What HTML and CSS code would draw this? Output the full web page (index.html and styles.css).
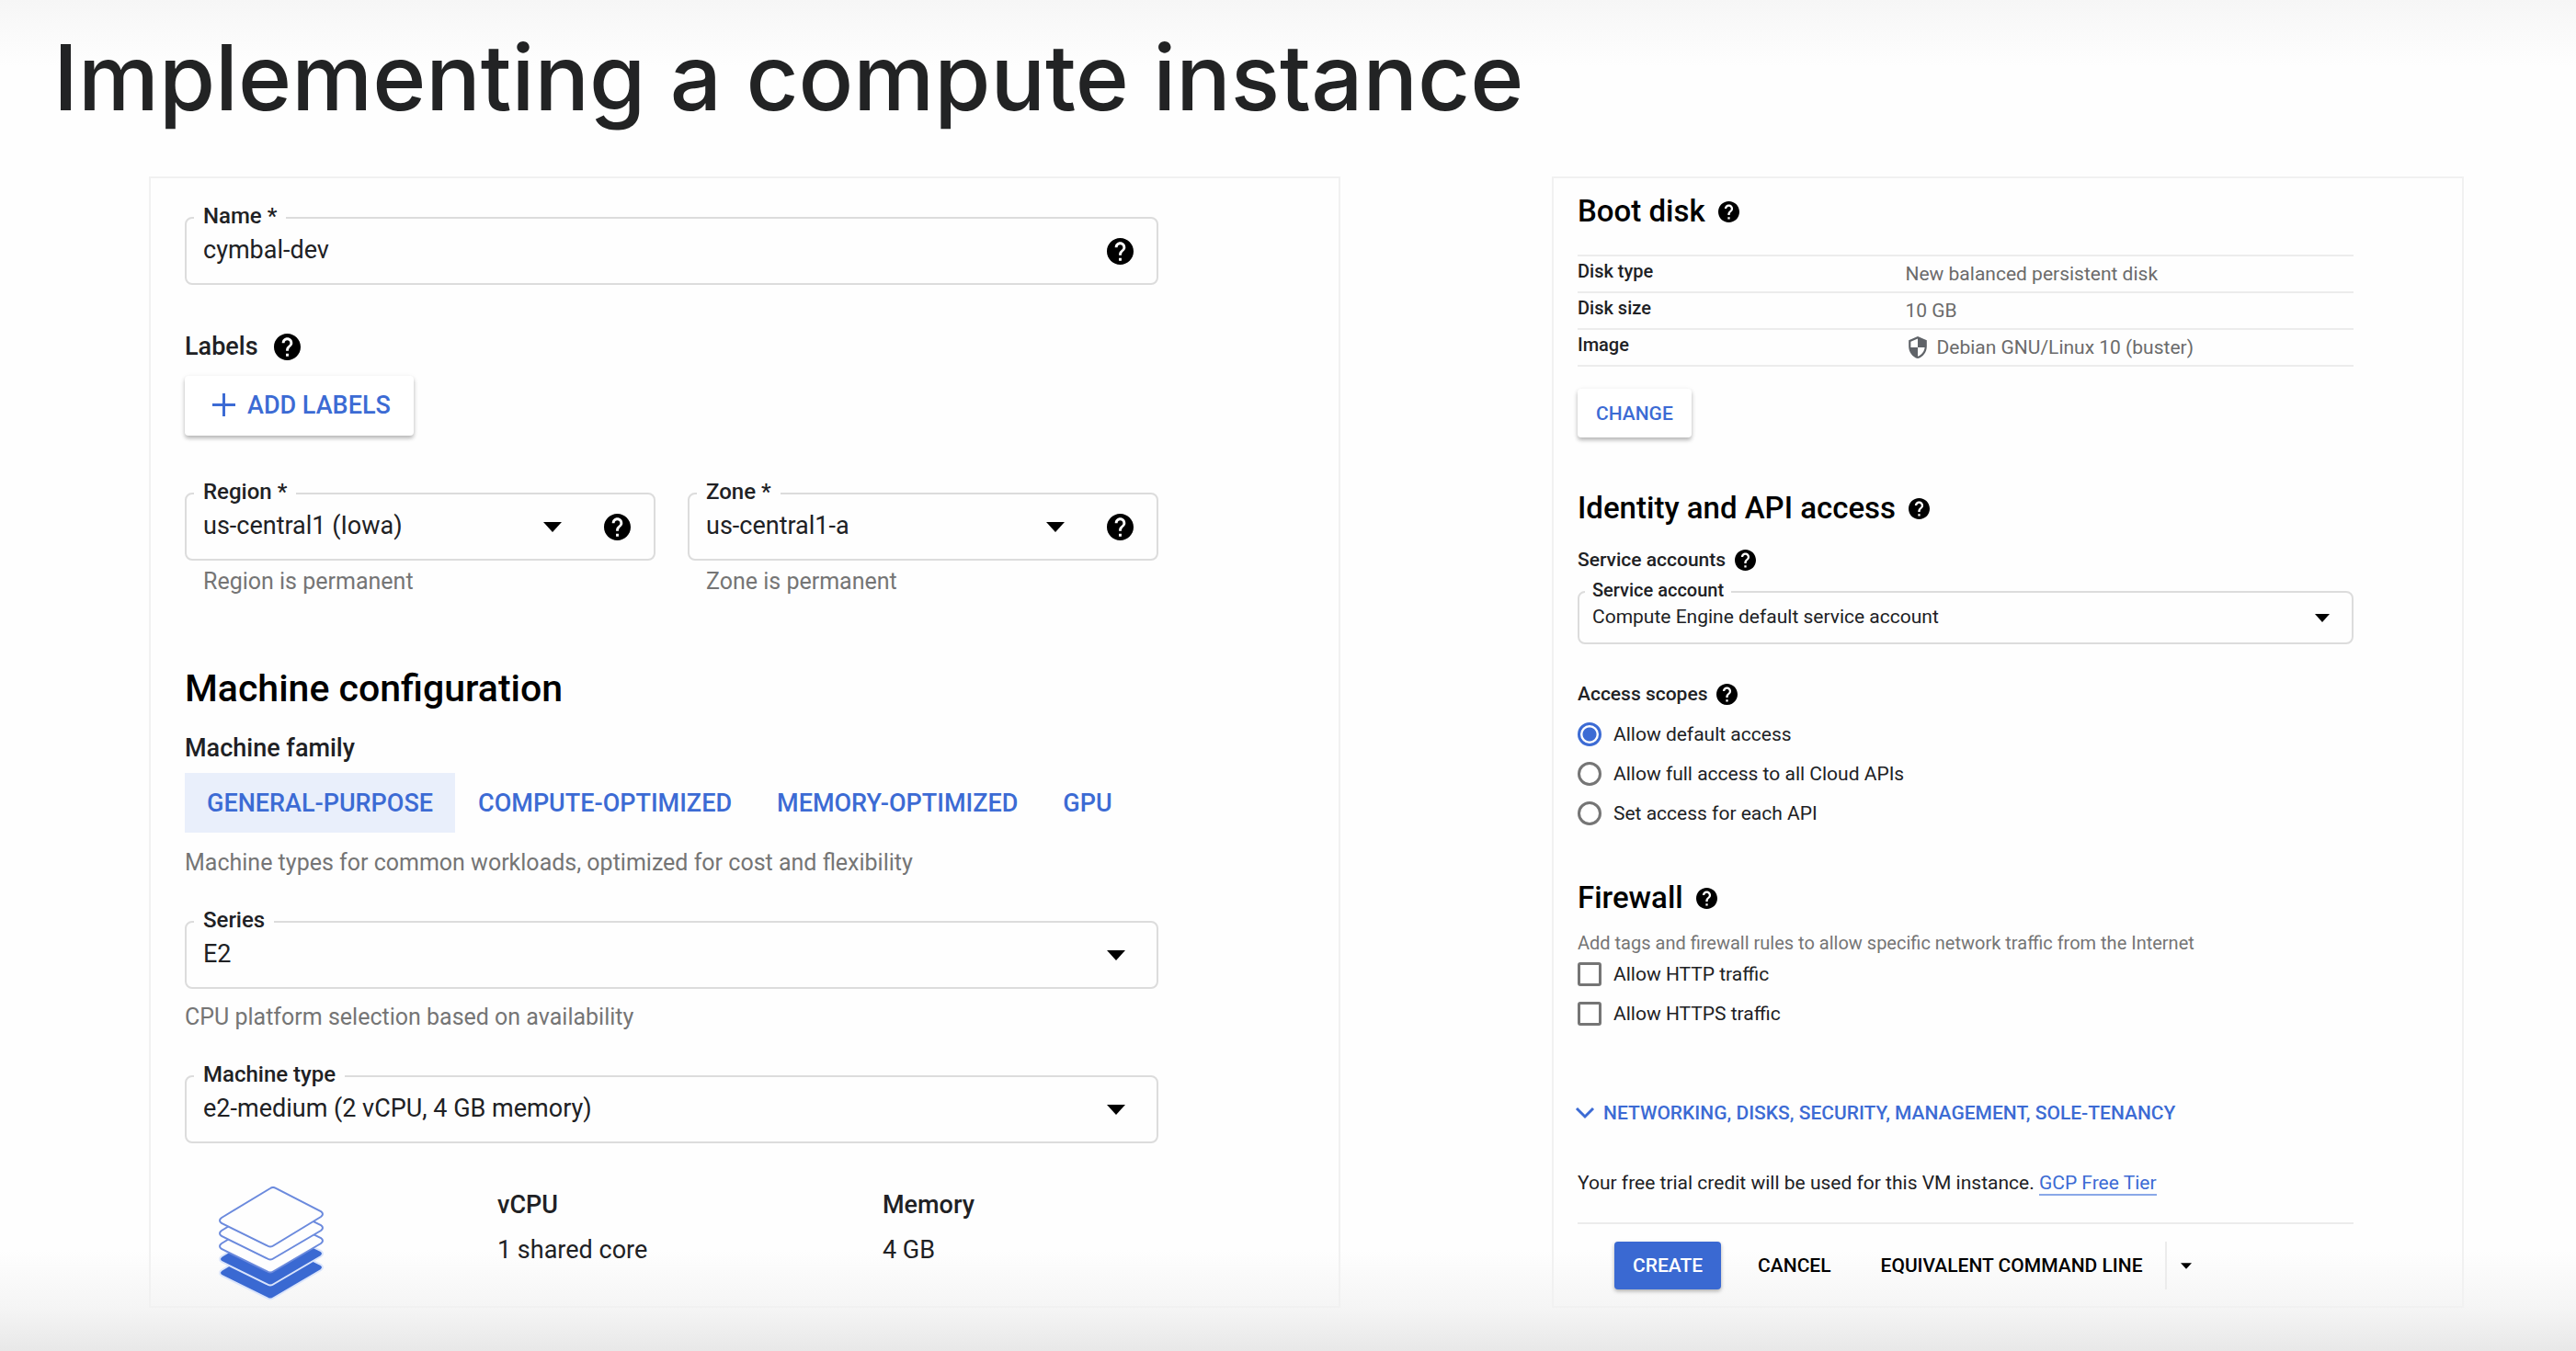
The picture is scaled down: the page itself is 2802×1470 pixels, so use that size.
FILE: index.html
```html
<!DOCTYPE html>
<html lang="en">
<head>
<meta charset="utf-8">
<title>Implementing a compute instance</title>
<meta name="viewport" content="width=device-width, initial-scale=1">
<link rel="stylesheet" href="styles.css">
</head>
<body>
<svg class="sprite" aria-hidden="true">
  <symbol id="help" viewBox="2 2 20 20"><path d="M12 2C6.48 2 2 6.48 2 12s4.480 10 10 10 10-4.480 10-10S17.520 2 12 2zm1 17h-2v-2h2v2zm2.070-7.750l-.9.920C13.450 12.900 13 13.500 13 15h-2v-.5c0-1.100.450-2.100 1.170-2.830l1.240-1.260c.370-.360.590-.860.590-1.410 0-1.100-.9-2-2-2s-2 .9-2 2H8c0-2.210 1.790-4 4-4s4 1.790 4 4c0 .880-.360 1.680-.930 2.250z"/></symbol>
  <symbol id="arrow" viewBox="0 0 20 11"><path d="M0 0h20L10 11z"/></symbol>
</svg>

<header class="header">
  <h1 class="title">Implementing a compute instance</h1>
</header>

<main class="panels">
  <form class="panel panel-machine">
    <div class="field">
      <label class="field-label" for="name">Name *</label>
      <input class="field-control" id="name" type="text" value="cymbal-dev">
      <svg class="help"><use href="#help"/></svg>
    </div>

    <div class="labels-row subhead">Labels <svg class="help"><use href="#help"/></svg></div>
    <button class="btn btn-raised add-labels" type="button">
      <svg class="plus" viewBox="0 0 25 25"><path d="M12.500 0v25M0 12.500h25"/></svg>ADD LABELS
    </button>

    <div class="location">
      <div>
        <div class="field">
          <label class="field-label" for="region">Region *</label>
          <select class="field-control" id="region"><option>us-central1 (Iowa)</option></select>
          <svg class="arrow"><use href="#arrow"/></svg>
          <svg class="help"><use href="#help"/></svg>
        </div>
        <p class="hint hint-inset">Region is permanent</p>
      </div>
      <div>
        <div class="field">
          <label class="field-label" for="zone">Zone *</label>
          <select class="field-control" id="zone"><option>us-central1-a</option></select>
          <svg class="arrow"><use href="#arrow"/></svg>
          <svg class="help"><use href="#help"/></svg>
        </div>
        <p class="hint hint-inset">Zone is permanent</p>
      </div>
    </div>

    <h2 class="heading heading-machine">Machine configuration</h2>
    <h3 class="subhead family-title">Machine family</h3>
    <div class="tabs" role="tablist">
      <button class="tab tab-active" type="button" role="tab" aria-selected="true">GENERAL-PURPOSE</button>
      <button class="tab" type="button" role="tab">COMPUTE-OPTIMIZED</button>
      <button class="tab" type="button" role="tab">MEMORY-OPTIMIZED</button>
      <button class="tab" type="button" role="tab">GPU</button>
    </div>
    <p class="hint family-hint">Machine types for common workloads, optimized for cost and flexibility</p>

    <div class="field field-plain">
      <label class="field-label" for="series">Series</label>
      <select class="field-control" id="series"><option>E2</option></select>
      <svg class="arrow"><use href="#arrow"/></svg>
    </div>
    <p class="hint series-hint">CPU platform selection based on availability</p>

    <div class="field field-plain">
      <label class="field-label" for="type">Machine type</label>
      <select class="field-control" id="type"><option>e2-medium (2 vCPU, 4 GB memory)</option></select>
      <svg class="arrow"><use href="#arrow"/></svg>
    </div>

    <div class="specs">
      <svg class="layers" viewBox="0 0 114 124">
        <g class="layer-full">
          <path d="M3 91 54 60q3-2 6 0l51 25q4 3 0 6L60 121q-4 3-8 0L3 97q-4-3 0-6z"/>
          <path d="M3 76 54 45q3-2 6 0l51 25q4 3 0 6L60 106q-4 3-8 0L3 82q-4-3 0-6z"/>
        </g>
        <g class="layer-empty">
          <path d="M3 62 54 31q3-2 6 0l51 25q4 3 0 6L60 92q-4 3-8 0L3 68q-4-3 0-6z"/>
          <path d="M3 48 54 17q3-2 6 0l51 25q4 3 0 6L60 78q-4 3-8 0L3 54q-4-3 0-6z"/>
          <path d="M3 34 56 2q3-2 6 0l49 25q4 3 0 6L60 64q-4 3-8 0L3 40q-4-3 0-6z"/>
        </g>
      </svg>
      <dl class="spec"><dt>vCPU</dt><dd>1 shared core</dd></dl>
      <dl class="spec"><dt>Memory</dt><dd>4 GB</dd></dl>
    </div>
  </form>

  <form class="panel panel-options">
    <h2 class="heading">Boot disk <svg class="help"><use href="#help"/></svg></h2>
    <table class="disk">
      <tr><th scope="row">Disk type</th><td>New balanced persistent disk</td></tr>
      <tr><th scope="row">Disk size</th><td>10 GB</td></tr>
      <tr><th scope="row">Image</th><td><span class="image-name"><svg class="shield" viewBox="3 1 18 22"><path d="M12 1L3 5v6c0 5.550 3.840 10.740 9 12 5.160-1.260 9-6.450 9-12V5l-9-4zm0 10.990h7c-.530 4.120-3.280 7.790-7 8.940V12H5V6.300l7-3.110v8.800z"/></svg>Debian GNU/Linux 10 (buster)</span></td></tr>
    </table>
    <button class="btn btn-raised change" type="button">CHANGE</button>

    <h2 class="heading heading-identity">Identity and API access <svg class="help"><use href="#help"/></svg></h2>
    <h3 class="subhead accounts-title">Service accounts <svg class="help"><use href="#help"/></svg></h3>
    <div class="field">
      <label class="field-label" for="account">Service account</label>
      <select class="field-control" id="account"><option>Compute Engine default service account</option></select>
      <svg class="arrow"><use href="#arrow"/></svg>
    </div>

    <h3 class="subhead scopes-title" id="scopes">Access scopes <svg class="help"><use href="#help"/></svg></h3>
    <div class="choices" role="radiogroup" aria-labelledby="scopes">
      <label class="choice"><input type="radio" name="scope" checked>Allow default access</label>
      <label class="choice"><input type="radio" name="scope">Allow full access to all Cloud APIs</label>
      <label class="choice"><input type="radio" name="scope">Set access for each API</label>
    </div>

    <h2 class="heading heading-firewall">Firewall <svg class="help"><use href="#help"/></svg></h2>
    <p class="hint firewall-hint">Add tags and firewall rules to allow specific network traffic from the Internet</p>
    <div class="choices">
      <label class="choice"><input type="checkbox">Allow HTTP traffic</label>
      <label class="choice"><input type="checkbox">Allow HTTPS traffic</label>
    </div>

    <button class="expander" type="button"><svg class="chevron" viewBox="0 0 22 14"><path d="M2 2l9 9 9-9"/></svg>NETWORKING, DISKS, SECURITY, MANAGEMENT, SOLE-TENANCY</button>
    <p class="trial">Your free trial credit will be used for this VM instance. <a href="#tier">GCP Free Tier</a></p>

    <div class="actions">
      <button class="btn btn-primary" type="submit">CREATE</button>
      <button class="btn btn-flat" type="button">CANCEL</button>
      <div class="split">
        <button class="btn split-main" type="button">EQUIVALENT COMMAND LINE</button>
        <button class="btn split-more" type="button" aria-label="More"><svg class="arrow arrow-small"><use href="#arrow"/></svg></button>
      </div>
    </div>
  </form>
</main>
</body>
</html>
```
FILE: styles.css
```css
* { box-sizing: border-box; }

body {
  margin: 0;
  min-height: 100vh;
  padding-bottom: 46px;
  background:
    linear-gradient(to bottom, #f6f6f6, rgba(255, 255, 255, 0)) top / 100% 72px no-repeat,
    linear-gradient(to top, #e8e8e8, #f5f5f5 48px, rgba(255, 255, 255, 0)) bottom / 100% 110px no-repeat,
    #fefefe;
  color: #202124;
  font-family: Roboto, "Liberation Sans", sans-serif;
}

h1, h2, h3, p, dl, dd { margin: 0; }
button, input, select { font: inherit; color: inherit; margin: 0; }
.sprite { display: none; }

.header { padding: 24px 58px 48px; }
.title {
  font: 500 99px/120px Inter, "Open Sans", sans-serif;
  color: #222324;
}

.panels {
  display: grid;
  grid-template-columns: 1296fr 992fr;
  gap: 230px;
  padding: 0 122px 0 162px;
}
.panel { border: 2px solid #f1f1f1; }
.panel-machine { padding: 42px 196px 6px 37px; font-size: 27px; line-height: 32px; }
.panel-options { padding: 16px 118px 16px 26px; font-size: 21px; line-height: 28px; }

/* Headings */
.heading { display: flex; align-items: center; gap: 14px; color: #000; font-weight: 500; font-size: 33px; line-height: 40px; }
.heading-machine { margin-top: 76px; font-size: 41px; line-height: 48px; }
.subhead { display: flex; align-items: center; gap: 17px; font-weight: 500; font-size: inherit; }
.hint { color: #757575; font-size: 25px; }

/* Icons */
.help { flex: none; width: 29px; height: 29px; fill: #000; }
.arrow { flex: none; width: 20px; height: 11px; fill: #000; pointer-events: none; }
.panel-options .help { width: 23px; height: 23px; }
.panel-options .arrow { width: 16px; height: 9px; }

/* Outlined fields */
.field {
  position: relative;
  display: flex;
  align-items: center;
  gap: 46px;
  height: 74px;
  padding: 0 25px 0 18px;
  border: 2px solid #dcdcdc;
  border-radius: 8px;
}
.field-plain { padding-right: 34px; }
.field-label {
  position: absolute;
  top: -17px;
  left: 8px;
  padding: 0 10px;
  background: #fefefe;
  font-size: 24px;
  line-height: 28px;
  font-weight: 500;
}
.field-control {
  flex: 1;
  min-width: 0;
  height: 100%;
  padding: 0 0 2px;
  border: 0;
  outline: 0;
  background: none;
  appearance: none;
}
.panel-options .field { height: 58px; padding: 0 24px 0 14px; }
.panel-options .field-label { top: -17px; left: 6px; padding: 0 8px; font-size: 20px; }

/* Buttons */
.btn {
  display: inline-flex;
  align-items: center;
  justify-content: center;
  padding: 0;
  border: 0;
  border-radius: 4px;
  background: none;
  font-weight: 500;
  white-space: nowrap;
}
.btn-raised { background: #fff; color: #3c6bd4; box-shadow: 0 3px 4px rgba(0, 0, 0, .25), 0 1px 6px rgba(0, 0, 0, .06); }
.add-labels { height: 65px; padding: 0 25px 2px 30px; gap: 13px; margin-top: 16px; }
.plus { width: 25px; height: 25px; stroke: #3c6bd4; stroke-width: 3; }
.change { height: 53px; padding: 0 20px; margin-top: 24px; }

/* Machine form */
.labels-row { margin-top: 51px; }
.location { display: grid; grid-template-columns: 1fr 1fr; gap: 35px; margin-top: 62px; }
.hint-inset { margin-top: 7px; padding-left: 20px; }
.family-title { margin-top: 25px; }
.tabs { display: flex; gap: 1px; margin-top: 11px; }
.tab { height: 65px; padding: 0 24px; border: 0; background: none; color: #3c6bd4; font-weight: 500; white-space: nowrap; }
.tab-active { background: #e9effb; }
.family-hint { margin: 17px 0 47px; }
.series-hint { margin: 15px 0 47px; }
.specs { display: grid; grid-template-columns: 340px 419px 1fr; margin-top: 47px; }
.layers { width: 114px; height: 124px; margin-left: 37px; stroke-width: 2; }
.layer-full { fill: #3a69d2; stroke: #dbe5fb; }
.layer-empty { fill: #fefefe; stroke: #6b8add; }
.spec { padding-top: 4px; }
.spec dt { font-weight: 500; margin-bottom: 17px; }

/* Boot disk */
.disk { width: 100%; margin-top: 27px; border-collapse: collapse; table-layout: fixed; border-top: 2px solid #ececec; }
.disk tr { height: 40px; border-bottom: 2px solid #ececec; }
.disk th { width: 42%; padding: 0 0 6px; text-align: left; font-size: 20px; font-weight: 500; }
.disk td { padding: 0 0 0 2px; color: #6b6b6b; }
.image-name { display: flex; align-items: center; gap: 10px; padding-left: 4px; }
.shield { width: 20px; height: 24px; fill: #5f6368; }

/* Access and firewall */
.heading-identity { margin-top: 57px; }
.accounts-title { margin: 22px 0 20px; gap: 10px; }
.scopes-title { margin: 40px 0 16px; gap: 10px; }
.choices { display: grid; gap: 15px; }
.choice { display: flex; align-items: center; gap: 13px; }
.choice input { appearance: none; width: 26px; height: 26px; border: 3px solid #757575; background: #fff; }
.choice input[type="checkbox"] { border-radius: 3px; }
.choice input[type="radio"] { border-radius: 50%; }
.choice input[type="radio"]:checked { border-color: #3c6bd4; background: radial-gradient(circle, #3c6bd4 7px, #fff 8px); }
.heading-firewall { margin-top: 58px; }
.firewall-hint { margin: 15px 0 6px; font-size: 20px; }

/* Footer of the form */
.expander { display: flex; align-items: center; gap: 9px; margin: 80px 0 48px -3px; padding: 0; border: 0; background: none; color: #3c6bd4; font-weight: 500; white-space: nowrap; }
.chevron { width: 22px; height: 14px; fill: none; stroke: #3c6bd4; stroke-width: 3; }
.trial a { color: #3c6bd4; text-decoration: none; border-bottom: 2px solid #8aa8e8; }
.actions { display: flex; margin-top: 29px; padding: 19px 0 0 40px; border-top: 2px solid #ececec; }
.actions .btn { height: 52px; padding: 0 20px; }
.actions .btn-primary { background: #3a69d2; color: #fff; box-shadow: 0 2px 4px rgba(0, 0, 0, .3); }
.actions .btn-flat { margin-left: 20px; }
.actions .btn-flat, .actions .split-main { color: #000; }
.split { display: flex; gap: 4px; margin-left: 14px; }
.actions .split-more { padding: 0 15px; border-left: 2px solid #ececec; border-radius: 0; }
.panel-options .arrow-small { width: 12px; height: 7px; }
```
